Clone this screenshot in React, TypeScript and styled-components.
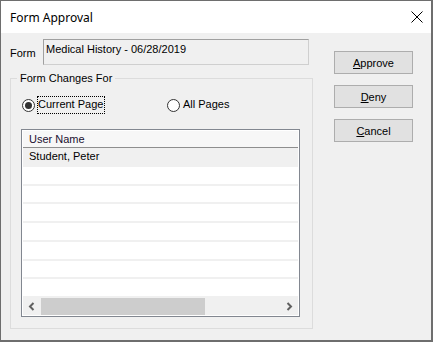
import styled, { createGlobalStyle } from 'styled-components';

const GlobalStyle = createGlobalStyle`
  body {
    margin: 0;
    background: #ffffff;
    font-family: 'Liberation Sans', Arial, sans-serif;
  }
`;

const Window = styled.div`
  width: 433px;
  height: 342px;
  box-sizing: border-box;
  border: 1px solid #6e6e6e;
  border-right-width: 2px;
  border-bottom-width: 2px;
  display: flex;
  flex-direction: column;
  background: #f0f0f0;
`;

const TitleBar = styled.div`
  height: 32px;
  flex: none;
  background: #ffffff;
  display: flex;
  align-items: center;
  justify-content: space-between;
  padding: 0 8px 0 9px;
`;

const Title = styled.span`
  font-family: 'Noto Sans', 'Liberation Sans', sans-serif;
  font-size: 12px;
  color: #000;
`;

const CloseIcon = styled.svg`
  width: 12px;
  height: 12px;
  display: block;
`;

const Body = styled.div`
  flex: 1;
  display: flex;
  padding: 6px 0 0 9px;
  font-size: 11px;
  line-height: 13px;
  color: #000;
`;

const Main = styled.div`
  width: 303px;
  display: flex;
  flex-direction: column;
`;

const FormRow = styled.div`
  display: flex;
  align-items: flex-start;
`;

const FieldLabel = styled.span`
  width: 33px;
  margin-top: 8px;
`;

const TextBox = styled.div`
  width: 266px;
  height: 26px;
  box-sizing: border-box;
  padding: 3px 2px;
  border: 1px solid #a0a0a0;
  border-right-color: #cfcfcf;
  border-bottom-color: #cfcfcf;
  background: #f0f0f0;
`;

const GroupBox = styled.fieldset`
  margin: 7px 0 0 0;
  height: 257px;
  box-sizing: border-box;
  padding: 0 12px 11px 10px;
  border: 1px solid #dcdcdc;
  display: flex;
  flex-direction: column;
`;

const Legend = styled.legend`
  padding: 0 3px;
  margin-left: -4px;
  line-height: 13px;
`;

const RadioRow = styled.div`
  display: flex;
  align-items: center;
  margin-top: 11px;
  height: 18px;
`;

const RadioOption = styled.label<{ $width?: number }>`
  display: flex;
  align-items: center;
  width: ${(p) => (p.$width ? `${p.$width}px` : 'auto')};
`;

const RadioCircle = styled.span<{ $checked?: boolean }>`
  width: 13px;
  height: 13px;
  box-sizing: border-box;
  margin-left: 1px;
  border-radius: 50%;
  border: 1px solid #333333;
  background: #ffffff;
  display: flex;
  align-items: center;
  justify-content: center;

  &::after {
    content: '';
    width: 7px;
    height: 7px;
    border-radius: 50%;
    background: ${(p) => (p.$checked ? '#333333' : 'transparent')};
  }
`;

const RadioText = styled.span<{ $focused?: boolean }>`
  margin-left: 2px;
  padding: 1px 1px 2px 0;
  border: 1px dotted ${(p) => (p.$focused ? '#000' : 'transparent')};
`;

const ListView = styled.div`
  margin-top: 15px;
  width: 279px;
  height: 188px;
  box-sizing: border-box;
  border: 1px solid #828790;
  padding: 1px;
  background: #ffffff;
  display: flex;
  flex-direction: column;
`;

const ListHeader = styled.div`
  height: 17px;
  flex: none;
  box-sizing: border-box;
  padding: 2px 6px 0;
  background: #f7f7f7;
  border-bottom: 1px solid #8e8e8e;
  color: #1b1030;
`;

const Rows = styled.div`
  flex: 1;
  display: flex;
  flex-direction: column;
`;

const Row = styled.div<{ $selected?: boolean }>`
  flex: 1;
  box-sizing: border-box;
  padding: 2px 6px 0;
  background: ${(p) => (p.$selected ? '#f0f0f0' : '#ffffff')};
  border-bottom: 2px solid #f0f0f0;
`;

const ScrollBar = styled.div`
  height: 17px;
  flex: none;
  display: flex;
  background: #f0f0f0;
`;

const ScrollArrow = styled.div`
  width: 17px;
  display: flex;
  align-items: center;
  justify-content: center;
`;

const ScrollTrack = styled.div`
  flex: 1;
  display: flex;
  padding-left: 1px;
`;

const ScrollThumb = styled.div`
  width: 164px;
  background: #cdcdcd;
`;

const Side = styled.div`
  display: flex;
  flex-direction: column;
  gap: 11px;
  margin-left: 21px;
  padding-top: 12px;
`;

const Button = styled.button`
  width: 79px;
  height: 23px;
  box-sizing: border-box;
  padding: 0;
  border: 1px solid #adadad;
  background: #e1e1e1;
  font-family: 'Liberation Sans', Arial, sans-serif;
  font-size: 11px;
  color: #000;
  text-align: center;
`;

const Key = styled.span`
  text-decoration: underline;
`;

const users = ['Student, Peter', '', '', '', '', '', '', ''];

const Chevron = ({ dir }: { dir: 'left' | 'right' }) => (
  <svg width="7" height="9" viewBox="0 0 7 9">
    <path
      d={dir === 'left' ? 'M5.5 1 L2 4.5 L5.5 8' : 'M1.5 1 L5 4.5 L1.5 8'}
      fill="none"
      stroke="#606060"
      strokeWidth="2"
    />
  </svg>
);

export default function App() {
  return (
    <>
      <GlobalStyle />
      <Window>
        <TitleBar>
          <Title>Form Approval</Title>
          <CloseIcon viewBox="0 0 12 12">
            <path d="M0.5 0.5 L11.5 11.5 M11.5 0.5 L0.5 11.5" stroke="#000" strokeWidth="1" />
          </CloseIcon>
        </TitleBar>
        <Body>
          <Main>
            <FormRow>
              <FieldLabel>Form</FieldLabel>
              <TextBox>Medical History - 06/28/2019</TextBox>
            </FormRow>
            <GroupBox>
              <Legend>Form Changes For</Legend>
              <RadioRow>
                <RadioOption $width={145}>
                  <RadioCircle $checked />
                  <RadioText $focused>Current Page</RadioText>
                </RadioOption>
                <RadioOption>
                  <RadioCircle />
                  <RadioText>All Pages</RadioText>
                </RadioOption>
              </RadioRow>
              <ListView>
                <ListHeader>User Name</ListHeader>
                <Rows>
                  {users.map((u, i) => (
                    <Row key={i} $selected={i === 0}>
                      {u}
                    </Row>
                  ))}
                </Rows>
                <ScrollBar>
                  <ScrollArrow>
                    <Chevron dir="left" />
                  </ScrollArrow>
                  <ScrollTrack>
                    <ScrollThumb />
                  </ScrollTrack>
                  <ScrollArrow>
                    <Chevron dir="right" />
                  </ScrollArrow>
                </ScrollBar>
              </ListView>
            </GroupBox>
          </Main>
          <Side>
            <Button>
              <Key>A</Key>pprove
            </Button>
            <Button>
              <Key>D</Key>eny
            </Button>
            <Button>
              <Key>C</Key>ancel
            </Button>
          </Side>
        </Body>
      </Window>
    </>
  );
}
